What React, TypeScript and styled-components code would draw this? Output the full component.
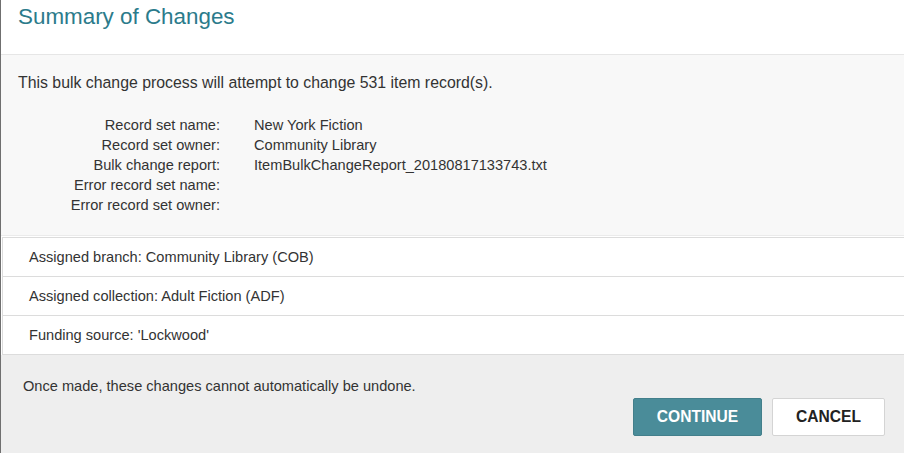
import React from "react";
import styled, { createGlobalStyle } from "styled-components";

const Global = createGlobalStyle`
  html, body { margin: 0; padding: 0; }
  body {
    background: #6f6f6f;
    font-family: "Liberation Sans", Arial, sans-serif;
    color: #333;
    overflow: hidden;
  }
`;

const Modal = styled.div`
  margin-left: 1px;
  width: 903px;
  height: 453px;
  background: #fff;
  display: flex;
  flex-direction: column;
`;

const Header = styled.div`
  border-bottom: 1px solid #e6e6e6;
  padding: 4px 0 0 17px;
  box-sizing: border-box;
  height: 55px;
`;

const Title = styled.h1`
  margin: 0;
  font-weight: normal;
  font-size: 22.4px;
  line-height: 26px;
  color: #2b7b8b;
`;

const Body = styled.div`
  background: #f8f8f8;
  padding: 17px 18px 20px 17px;
  border-bottom: 1px solid #ebebeb;
  font-size: 14.6px;
  line-height: 20px;
`;

const Intro = styled.p`
  margin: 0 0 23px;
  font-size: 15.85px;
  line-height: 21px;
`;

const Details = styled.div`
  display: grid;
  grid-template-columns: 202px 1fr;
  column-gap: 34px;
  margin-top: -1px;
`;

const Label = styled.div`
  text-align: right;
  height: 20px;
`;

const Value = styled.div`
  height: 20px;
`;

const List = styled.div`
  margin: 1px 0 0 1px;
  background: #fff;
  border: 1px solid #dcdcdc;
  border-right: none;
`;

const Row = styled.div<{ $last?: boolean }>`
  height: 38px;
  display: flex;
  align-items: center;
  padding-left: 26px;
  font-size: 14.6px;
  border-bottom: ${(p) => (p.$last ? "none" : "1px solid #dcdcdc")};
`;

const Footer = styled.div`
  flex: 1;
  background: #eeeeee;
  padding: 21px 19px 0 22px;
  display: flex;
  flex-direction: column;
`;

const Note = styled.p`
  margin: 0;
  font-size: 14.6px;
  line-height: 20px;
`;

const Actions = styled.div`
  margin-top: 2px;
  display: flex;
  justify-content: flex-end;
  gap: 10px;
`;

const Button = styled.button<{ $primary?: boolean }>`
  height: 38px;
  width: ${(p) => (p.$primary ? "129px" : "113px")};
  border-radius: 2px;
  font-family: "Liberation Sans", Arial, sans-serif;
  font-weight: bold;
  font-size: 15.6px;
  text-transform: uppercase;
  cursor: pointer;
  padding: 0;
  background: ${(p) => (p.$primary ? "#4a8c99" : "#fff")};
  color: ${(p) => (p.$primary ? "#fff" : "#222")};
  border: 1px solid ${(p) => (p.$primary ? "#437f8b" : "#d4d4d4")};
`;

const details: [string, string][] = [
  ["Record set name:", "New York Fiction"],
  ["Record set owner:", "Community Library"],
  ["Bulk change report:", "ItemBulkChangeReport_20180817133743.txt"],
  ["Error record set name:", ""],
  ["Error record set owner:", ""],
];

const changes = [
  "Assigned branch: Community Library (COB)",
  "Assigned collection: Adult Fiction (ADF)",
  "Funding source: 'Lockwood'",
];

export default function App() {
  return (
    <>
      <Global />
      <Modal>
        <Header>
          <Title>Summary of Changes</Title>
        </Header>
        <Body>
          <Intro>This bulk change process will attempt to change 531 item record(s).</Intro>
          <Details>
            {details.map(([l, v]) => (
              <React.Fragment key={l}>
                <Label>{l}</Label>
                <Value>{v}</Value>
              </React.Fragment>
            ))}
          </Details>
        </Body>
        <List>
          {changes.map((c, i) => (
            <Row key={c} $last={i === changes.length - 1}>
              {c}
            </Row>
          ))}
        </List>
        <Footer>
          <Note>Once made, these changes cannot automatically be undone.</Note>
          <Actions>
            <Button $primary>Continue</Button>
            <Button>Cancel</Button>
          </Actions>
        </Footer>
      </Modal>
    </>
  );
}
